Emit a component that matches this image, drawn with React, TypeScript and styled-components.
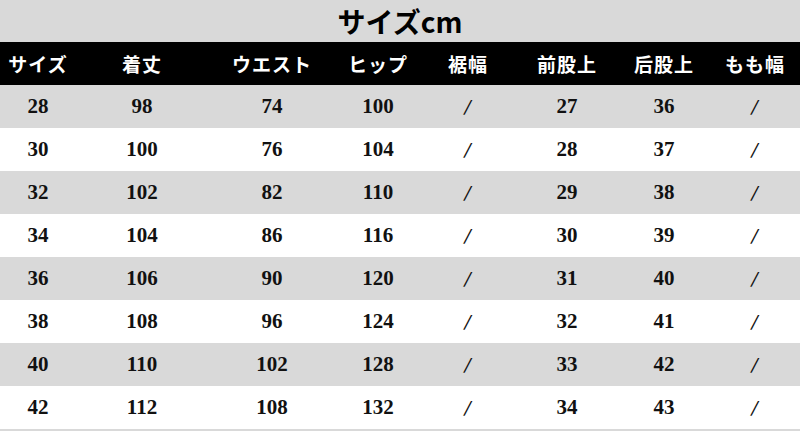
import React from "react";
import styled, { createGlobalStyle } from "styled-components";

const GlobalStyle = createGlobalStyle`
  html, body {
    margin: 0;
    padding: 0;
    background: #ffffff;
  }
`;

const COLS = "76px 132px 128px 84px 96px 102px 92px 90px";

const Sheet = styled.div`
  width: 800px;
  height: 431px;
  display: flex;
  flex-direction: column;
  background: #ffffff;
  overflow: hidden;
`;

const Title = styled.div`
  height: 42px;
  display: flex;
  align-items: center;
  justify-content: center;
  background: #d9d9d9;
  color: #000;
  font-family: "Noto Sans CJK JP", "Noto Sans", sans-serif;
  font-weight: 700;
  font-size: 28px;
`;

const HeadRow = styled.div`
  height: 43px;
  display: grid;
  grid-template-columns: ${COLS};
  align-items: center;
  background: #000;
  color: #fff;
  font-family: "Noto Sans CJK JP", sans-serif;
  font-weight: 700;
  font-size: 19px;
  letter-spacing: 1px;
`;

const Row = styled.div<{ shade: boolean; last?: boolean }>`
  height: 43px;
  display: grid;
  grid-template-columns: ${COLS};
  align-items: center;
  background: ${({ shade }) => (shade ? "#d9d9d9" : "#ffffff")};
  border-bottom: ${({ last }) => (last ? "2px solid #d9d9d9" : "none")};
  color: #111;
  font-family: "Liberation Serif", "DejaVu Serif", serif;
  font-weight: 700;
  font-size: 21px;
`;

const Cell = styled.div`
  text-align: center;
  white-space: nowrap;
`;

const Slash = styled.span`
  display: inline-block;
  font-family: "DejaVu Sans", sans-serif;
  font-weight: 400;
  font-size: 18px;
  transform: skewX(-12deg);
`;

const headers = ["サイズ", "着丈", "ウエスト", "ヒップ", "裾幅", "前股上", "后股上", "もも幅"];

const data = [
  ["28", "98", "74", "100", "/", "27", "36", "/"],
  ["30", "100", "76", "104", "/", "28", "37", "/"],
  ["32", "102", "82", "110", "/", "29", "38", "/"],
  ["34", "104", "86", "116", "/", "30", "39", "/"],
  ["36", "106", "90", "120", "/", "31", "40", "/"],
  ["38", "108", "96", "124", "/", "32", "41", "/"],
  ["40", "110", "102", "128", "/", "33", "42", "/"],
  ["42", "112", "108", "132", "/", "34", "43", "/"],
];

export default function App() {
  return (
    <>
      <GlobalStyle />
      <Sheet>
        <Title>サイズcm</Title>
        <HeadRow>
          {headers.map((h) => (
            <Cell key={h}>{h}</Cell>
          ))}
        </HeadRow>
        {data.map((r, i) => (
          <Row key={i} shade={i % 2 === 0} last={i === data.length - 1}>
            {r.map((v, j) => (
              <Cell key={j}>{v === "/" ? <Slash>/</Slash> : v}</Cell>
            ))}
          </Row>
        ))}
      </Sheet>
    </>
  );
}
